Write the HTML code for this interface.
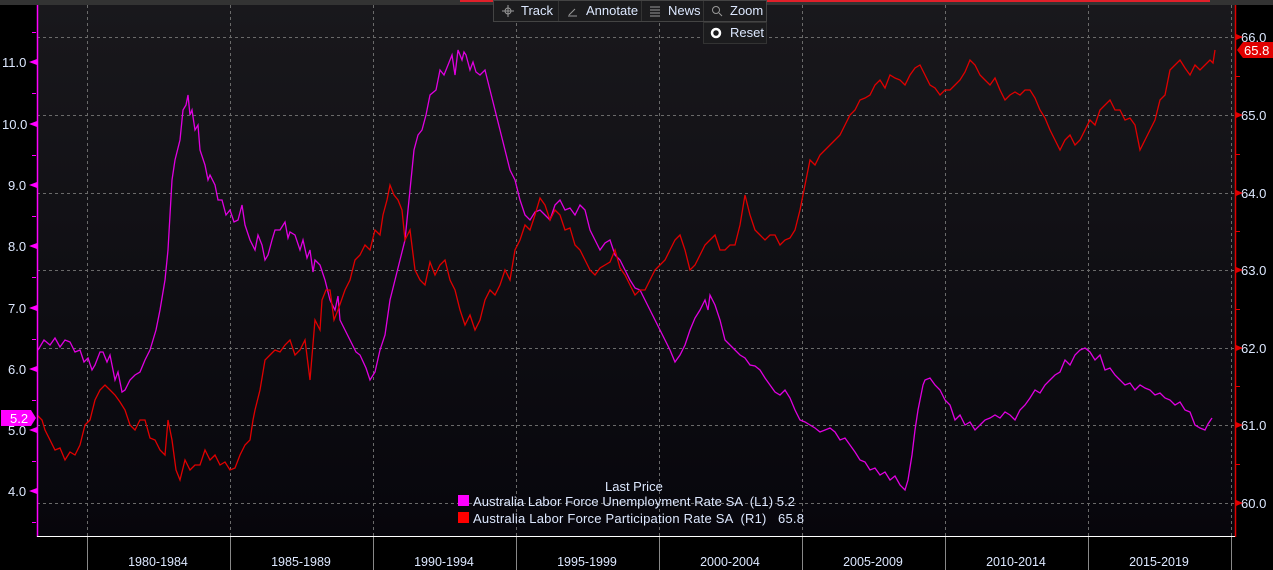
<!DOCTYPE html>
<html><head><meta charset="utf-8"><style>
html,body{margin:0;padding:0;background:#000;width:1273px;height:570px;overflow:hidden;font-family:"Liberation Sans",sans-serif;}
</style></head><body>
<svg width="1273" height="570" xmlns="http://www.w3.org/2000/svg" style="display:block">
<defs><linearGradient id="bg" x1="0" y1="0" x2="0" y2="1"><stop offset="0" stop-color="#19181c"/><stop offset="1" stop-color="#07060c"/></linearGradient></defs>
<rect x="0" y="0" width="1273" height="570" fill="#000"/>
<rect x="37" y="5" width="1198" height="531" fill="url(#bg)"/>
<rect x="0" y="0" width="1273" height="5" fill="#333"/>
<rect x="460" y="0" width="750" height="2" fill="#e0202a"/>
<g stroke="#6a6a6a" stroke-dasharray="3,3" stroke-width="1">
<line x1="37" x2="1235" y1="37.5" y2="37.5"/><line x1="37" x2="1235" y1="115.5" y2="115.5"/><line x1="37" x2="1235" y1="193.5" y2="193.5"/><line x1="37" x2="1235" y1="270.5" y2="270.5"/><line x1="37" x2="1235" y1="348.5" y2="348.5"/><line x1="37" x2="1235" y1="425.5" y2="425.5"/><line x1="37" x2="1235" y1="503.5" y2="503.5"/>
<line x1="87.5" x2="87.5" y1="5" y2="536"/><line x1="230.5" x2="230.5" y1="5" y2="536"/><line x1="373.5" x2="373.5" y1="5" y2="536"/><line x1="516.5" x2="516.5" y1="5" y2="536"/><line x1="659.5" x2="659.5" y1="5" y2="536"/><line x1="802.5" x2="802.5" y1="5" y2="536"/><line x1="945.5" x2="945.5" y1="5" y2="536"/><line x1="1088.5" x2="1088.5" y1="5" y2="536"/><line x1="1231.5" x2="1231.5" y1="5" y2="536"/>
</g>
<polyline fill="none" stroke="#e000e0" stroke-width="1.3" points="38,350 44,340 50,345 55,338 60,347 65,340 70,342 75,352 80,350 84,362 88,358 92,370 95,365 100,352 103,352 107,362 110,355 115,380 118,372 122,392 125,390 130,380 135,375 140,372 145,360 150,350 156,330 160,310 165,280 168,250 172,180 175,160 180,140 183,110 186,105 188,95 190,115 192,110 195,130 198,125 200,150 205,165 208,180 210,175 215,185 218,200 222,200 226,215 230,210 234,222 238,220 242,205 245,225 250,240 255,250 258,235 262,245 265,260 268,255 272,240 275,230 280,230 285,222 288,238 290,232 295,235 300,250 303,240 307,258 310,250 313,272 315,260 320,265 325,280 330,300 335,310 338,296 340,320 345,330 350,340 356,352 360,355 366,368 370,380 375,372 380,350 385,335 390,300 395,280 400,260 405,240 410,190 414,150 418,135 422,130 426,115 430,95 436,90 440,70 444,75 448,65 452,55 455,75 458,50 462,60 464,52 466,55 470,70 473,62 476,72 480,75 485,70 490,90 495,110 500,130 505,150 510,170 515,180 520,200 525,215 530,220 535,212 540,210 545,215 550,220 555,205 560,200 565,210 570,208 575,215 580,205 585,210 590,230 595,240 600,250 605,243 610,240 615,255 620,260 625,270 630,280 635,288 640,290 645,300 650,310 655,320 660,330 665,340 670,350 675,362 680,355 685,345 690,330 695,318 700,310 705,300 708,310 710,295 715,305 720,320 725,340 730,345 735,350 740,355 745,358 750,365 755,366 760,370 765,378 770,385 775,392 780,395 785,390 790,398 795,410 800,420 805,422 810,425 815,428 820,432 825,430 830,428 835,432 840,440 845,438 850,445 855,452 860,460 865,462 870,470 875,468 880,475 885,472 890,480 895,476 900,485 905,490 908,480 912,455 915,430 918,410 920,400 923,385 925,380 930,378 935,385 940,390 945,400 950,405 955,420 960,415 965,425 970,422 975,430 980,425 985,420 990,418 995,415 1000,418 1005,412 1010,415 1015,420 1020,410 1025,405 1030,398 1035,390 1040,393 1045,385 1050,380 1055,375 1060,372 1065,360 1070,365 1075,355 1080,350 1085,348 1090,352 1095,360 1100,355 1105,370 1110,368 1115,375 1120,380 1125,385 1130,383 1135,390 1140,385 1145,388 1150,390 1155,395 1160,393 1165,398 1170,400 1175,405 1180,402 1185,410 1190,412 1195,425 1200,428 1205,430 1208,424 1212,418"/>
<polyline fill="none" stroke="#e00000" stroke-width="1.3" points="37,415 42,420 45,430 50,440 55,450 60,448 65,460 70,452 75,455 80,445 85,425 90,420 95,400 100,390 105,385 110,390 115,395 120,402 125,410 130,425 135,430 140,420 145,420 150,438 155,440 160,450 165,455 168,420 172,440 176,470 180,480 185,460 190,470 195,465 200,465 205,450 210,460 215,455 220,465 225,462 230,470 235,468 240,455 245,445 250,440 253,420 255,410 260,390 265,360 270,355 275,350 280,352 285,345 290,340 295,355 300,350 305,340 310,380 315,320 320,330 322,300 326,290 330,290 334,320 338,310 345,290 350,280 355,260 360,255 365,245 370,250 375,230 380,235 383,215 387,200 390,185 394,195 398,200 402,210 405,240 410,230 415,270 420,280 425,285 430,262 435,275 440,265 445,260 450,280 455,290 460,310 465,325 470,315 475,330 480,320 485,300 490,290 495,295 500,285 505,270 510,280 515,250 520,240 525,225 530,230 535,215 540,198 545,205 550,220 555,210 560,215 565,230 570,228 575,245 580,250 585,260 590,270 595,275 600,268 605,265 610,262 615,250 620,268 625,275 630,285 635,295 640,290 645,290 650,280 655,270 660,265 665,260 670,250 675,240 680,235 685,250 690,270 695,265 700,255 705,245 710,240 715,235 720,250 725,250 730,245 735,245 740,225 745,195 750,215 755,230 760,235 765,240 770,235 775,235 780,245 785,240 790,238 795,230 800,210 805,185 810,160 815,165 820,155 825,150 830,145 835,140 840,135 845,125 850,115 855,110 860,100 865,98 870,95 875,85 880,80 885,88 890,75 895,78 900,80 905,85 910,75 915,68 920,65 925,75 930,85 935,88 940,95 945,90 950,90 955,85 960,80 965,72 970,60 975,65 980,75 985,80 990,85 995,78 1000,90 1005,100 1010,95 1015,92 1020,95 1025,90 1030,90 1035,98 1040,110 1045,118 1050,130 1055,140 1060,150 1065,140 1070,135 1075,145 1080,140 1085,130 1090,120 1095,125 1100,110 1105,105 1110,100 1115,110 1120,110 1125,120 1130,118 1135,125 1140,150 1145,140 1150,130 1155,120 1160,100 1165,95 1170,70 1175,65 1180,60 1185,68 1190,75 1195,65 1200,70 1205,65 1210,60 1213,63 1215,50"/>
<line x1="37.5" x2="37.5" y1="5" y2="537" stroke="#ff00ff" stroke-width="1.5"/>
<line x1="1235.5" x2="1235.5" y1="5" y2="537" stroke="#e00000" stroke-width="1.5"/>
<line x1="37" x2="1235" y1="536.5" y2="536.5" stroke="#fff" stroke-width="1"/>
<g stroke="#888"><line x1="87.5" x2="87.5" y1="537" y2="570"/><line x1="230.5" x2="230.5" y1="537" y2="570"/><line x1="373.5" x2="373.5" y1="537" y2="570"/><line x1="516.5" x2="516.5" y1="537" y2="570"/><line x1="659.5" x2="659.5" y1="537" y2="570"/><line x1="802.5" x2="802.5" y1="537" y2="570"/><line x1="945.5" x2="945.5" y1="537" y2="570"/><line x1="1088.5" x2="1088.5" y1="537" y2="570"/><line x1="1231.5" x2="1231.5" y1="537" y2="570"/></g>
<g font-size="12.5" fill="#dde8ff" text-anchor="middle">
<text x="158" y="566">1980-1984</text><text x="301" y="566">1985-1989</text><text x="444" y="566">1990-1994</text><text x="587" y="566">1995-1999</text><text x="730" y="566">2000-2004</text><text x="873" y="566">2005-2009</text><text x="1016" y="566">2010-2014</text><text x="1159" y="566">2015-2019</text>
</g>
<g font-size="13" fill="#dde8ff">
<text x="2" y="67">11.0</text><text x="2" y="129">10.0</text><text x="8" y="190">9.0</text><text x="8" y="251">8.0</text><text x="8" y="313">7.0</text><text x="8" y="374">6.0</text><text x="8" y="435">5.0</text><text x="8" y="496">4.0</text>
<text x="1241" y="42">66.0</text><text x="1241" y="120">65.0</text><text x="1241" y="198">64.0</text><text x="1241" y="275">63.0</text><text x="1241" y="353">62.0</text><text x="1241" y="430">61.0</text><text x="1241" y="508">60.0</text>
</g>
<g fill="#ff00ff"><polygon points="29,62 37,59 37,65"/><polygon points="29,124 37,121 37,127"/><polygon points="29,185 37,182 37,188"/><polygon points="29,246 37,243 37,249"/><polygon points="29,308 37,305 37,311"/><polygon points="29,369 37,366 37,372"/><polygon points="29,430 37,427 37,433"/><polygon points="29,491 37,488 37,494"/>
<rect x="32" y="32" width="4" height="1"/><rect x="32" y="93" width="4" height="1"/><rect x="32" y="155" width="4" height="1"/><rect x="32" y="216" width="4" height="1"/><rect x="32" y="277" width="4" height="1"/><rect x="32" y="339" width="4" height="1"/><rect x="32" y="400" width="4" height="1"/><rect x="32" y="461" width="4" height="1"/><rect x="32" y="522" width="4" height="1"/>
<polygon points="1,410 31,410 36,418 31,426 1,426"/></g>
<text x="10" y="423" font-size="13" fill="#fff">5.2</text>
<g fill="#e00000"><polygon points="1243,37 1236,34 1236,40"/><polygon points="1243,115 1236,112 1236,118"/><polygon points="1243,193 1236,190 1236,196"/><polygon points="1243,270 1236,267 1236,273"/><polygon points="1243,348 1236,345 1236,351"/><polygon points="1243,425 1236,422 1236,428"/><polygon points="1243,503 1236,500 1236,506"/>
<rect x="1236" y="76" width="4" height="1"/><rect x="1236" y="154" width="4" height="1"/><rect x="1236" y="231" width="4" height="1"/><rect x="1236" y="309" width="4" height="1"/><rect x="1236" y="386" width="4" height="1"/><rect x="1236" y="464" width="4" height="1"/>
<polygon points="1237,50 1243,42 1273,42 1273,58 1243,58"/></g>
<text x="1244" y="55" font-size="13" fill="#fff">65.8</text>
<rect x="493.5" y="0.5" width="273" height="21" fill="#1c1c1e" stroke="#444"/>
<rect x="703.5" y="22.5" width="63" height="21" fill="#1c1c1e" stroke="#333"/>
<g stroke="#333"><line x1="558.5" x2="558.5" y1="1" y2="21"/><line x1="641.5" x2="641.5" y1="1" y2="21"/><line x1="703.5" x2="703.5" y1="1" y2="21"/></g>
<g font-size="13" fill="#dde8ff"><text x="521" y="15">Track</text><text x="586" y="15">Annotate</text><text x="668" y="15">News</text><text x="730" y="15">Zoom</text><text x="730" y="37">Reset</text></g>
<g stroke="#999" fill="none" stroke-width="1"><circle cx="508" cy="11" r="3"/><line x1="502" x2="514" y1="11" y2="11"/><line x1="508" x2="508" y1="5" y2="17"/><line x1="569" x2="575" y1="15" y2="9"/><line x1="568" x2="577" y1="16" y2="16"/><line x1="650" x2="660" y1="7" y2="7"/><line x1="650" x2="660" y1="10" y2="10"/><line x1="650" x2="660" y1="13" y2="13"/><line x1="650" x2="660" y1="16" y2="16"/><circle cx="716" cy="10" r="3.5"/><line x1="719" x2="722" y1="13" y2="16"/></g>
<circle cx="716" cy="33" r="4" fill="none" stroke="#fff" stroke-width="2.5"/>
<text x="605" y="491" font-size="13" fill="#dde8ff">Last Price</text>
<rect x="458" y="495" width="11" height="11" fill="#ff00ff"/><rect x="458" y="512" width="11" height="11" fill="#ff0000"/>
<g font-size="13" fill="#dde8ff"><text x="473" y="506" xml:space="preserve" textLength="322">Australia Labor Force Unemployment Rate SA  (L1) 5.2</text><text x="473" y="523" xml:space="preserve" textLength="331">Australia Labor Force Participation Rate SA  (R1)   65.8</text></g>
</svg>
</body></html>
